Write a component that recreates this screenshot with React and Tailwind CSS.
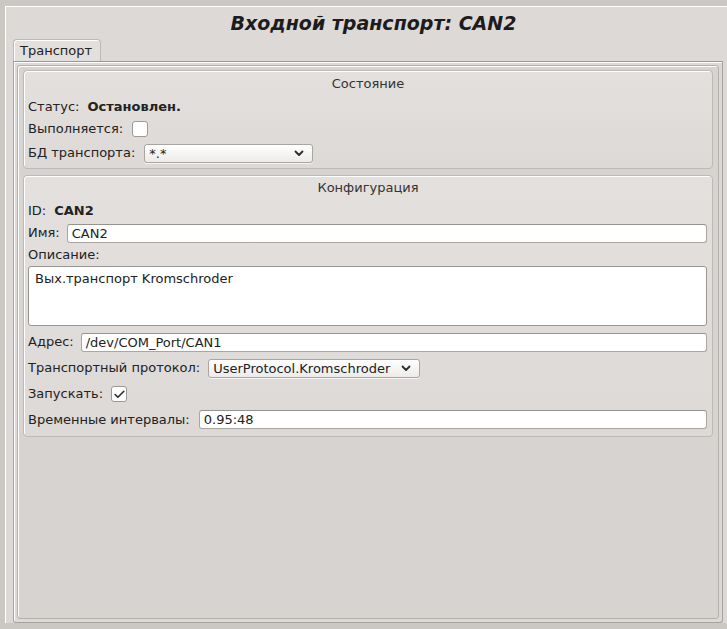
import { Check } from 'lucide-react';

function Chevron() {
  return (
    <svg width="10" height="7" viewBox="0 0 10 7" className="shrink-0">
      <path d="M1.5 1.5 L5 5 L8.5 1.5" fill="none" stroke="#2a2a2a" strokeWidth="1.8" strokeLinecap="round" strokeLinejoin="round" />
    </svg>
  );
}

function Combo({ value, className }) {
  return (
    <div className={`h-[19px] flex items-center justify-between pl-[4px] pr-[8px] rounded-[3px] border border-[#a9a5a1] bg-gradient-to-b from-white to-[#ecebe9] shadow-[0_1px_0_rgba(255,255,255,0.7)] ${className}`}>
      <span className="leading-none">{value}</span>
      <Chevron />
    </div>
  );
}

function TextBox({ value, className }) {
  return (
    <div className={`h-[19px] flex items-center px-[4px] bg-white rounded-[3px] border border-[#aaa6a2] border-t-[#96928e] ${className}`}>
      <span className="leading-none">{value}</span>
    </div>
  );
}

function CheckBox({ checked }) {
  return (
    <div className="w-[16px] h-[16px] rounded-[3px] bg-white border border-[#9d9995] flex items-center justify-center">
      {checked && <Check className="w-[13px] h-[13px] text-[#2a2a2a]" strokeWidth={3} />}
    </div>
  );
}

function GroupBox({ title, children, className, titleClass }) {
  return (
    <div className={`rounded-[4px] border border-[#bdb9b5] shadow-[inset_1px_1px_0_#ffffff] bg-gradient-to-b from-[#e3e0de] to-[#dcd9d6] px-[4px] ${className}`}>
      <div className={`flex items-center justify-center text-[#333] ${titleClass}`}>{title}</div>
      {children}
    </div>
  );
}

export default function App() {
  return (
    <div
      className="w-[727px] h-[629px] bg-[#cbc7c3] flex pl-[5px] pt-[6px] pb-[6px] text-[13px] text-[#222]"
      style={{ fontFamily: '"DejaVu Sans", "Noto Sans", sans-serif' }}
    >
      <div className="flex-1 flex flex-col bg-[#dcd9d6] border-l border-t border-white">
        <div className="h-[32px] flex items-center justify-center pl-[14px] text-[19px] font-bold italic text-[#1c1c1c]">
          Входной транспорт: CAN2
        </div>
        <div className="flex pl-[7px]">
          <div className="w-[88px] h-[23px] flex items-center pl-[6px] rounded-t-[4px] border border-b-0 border-[#bdb9b5] shadow-[inset_1px_1px_0_#ffffff] bg-[#e2dfdc] text-[#222]">
            Транспорт
          </div>
        </div>
        <div className="flex-1 flex ml-[7px] mr-[4px] -mt-[1px] border border-[#a7a39f] border-t-[#9a9692] shadow-[inset_1px_1px_0_#ffffff] rounded-b-[3px] p-[3px]">
          <div className="flex-1 flex flex-col border border-[#b3afab] shadow-[inset_1px_1px_0_#ffffff] bg-[#d7d3d0] rounded-[3px] px-[5px] pt-[4px]">
            <GroupBox title="Состояние" titleClass="h-[25px]" className="pb-[2px]">
              <div className="h-[22px] flex items-center gap-[8px]">
                <span>Статус:</span>
                <span className="font-bold">Остановлен.</span>
              </div>
              <div className="h-[22px] flex items-center gap-[9px]">
                <span>Выполняется:</span>
                <CheckBox checked={false} />
              </div>
              <div className="h-[26px] flex items-center gap-[9px]">
                <span>БД транспорта:</span>
                <Combo value="*.*" className="w-[169px]" />
              </div>
            </GroupBox>
            <GroupBox title="Конфигурация" titleClass="h-[24px]" className="mt-[6px] pb-[4px]">
              <div className="h-[22px] flex items-center gap-[8px]">
                <span>ID:</span>
                <span className="font-bold">CAN2</span>
              </div>
              <div className="h-[22px] flex items-center gap-[7px] pr-[1px]">
                <span>Имя:</span>
                <TextBox value="CAN2" className="flex-1" />
              </div>
              <div className="h-[22px] flex items-center">
                <span>Описание:</span>
              </div>
              <div className="h-[60px] mr-[1px] bg-white rounded-[3px] border border-[#9a9692] px-[6px] pt-[4px] leading-[16px]">
                Вых.транспорт Kromschroder
              </div>
              <div className="h-[26px] mt-[3px] flex items-center gap-[7px] pr-[1px]">
                <span>Адрес:</span>
                <TextBox value="/dev/COM_Port/CAN1" className="flex-1" />
              </div>
              <div className="h-[26px] flex items-center gap-[8px]">
                <span>Транспортный протокол:</span>
                <Combo value="UserProtocol.Kromschroder" className="w-[212px]" />
              </div>
              <div className="h-[26px] flex items-center gap-[8px]">
                <span>Запускать:</span>
                <CheckBox checked={true} />
              </div>
              <div className="h-[25px] flex items-center gap-[9px] pr-[1px]">
                <span>Временные интервалы:</span>
                <TextBox value="0.95:48" className="flex-1" />
              </div>
            </GroupBox>
          </div>
        </div>
      </div>
    </div>
  );
}
